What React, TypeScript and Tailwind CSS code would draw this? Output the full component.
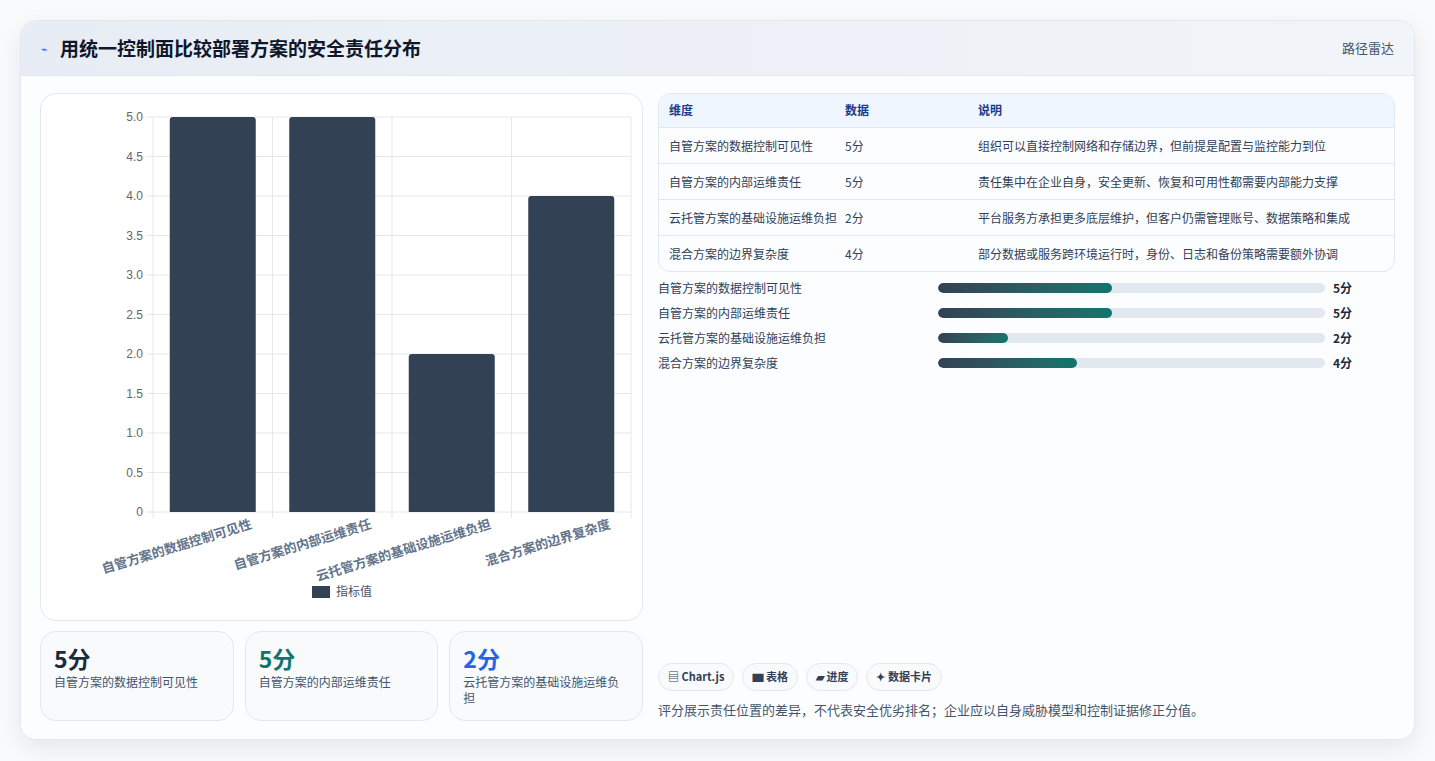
const font = { fontFamily: '"Noto Sans CJK SC", "Noto Sans", sans-serif' };

const rows = [
  { name: "自管方案的数据控制可见性", v: 5, note: "组织可以直接控制网络和存储边界，但前提是配置与监控能力到位" },
  { name: "自管方案的内部运维责任", v: 5, note: "责任集中在企业自身，安全更新、恢复和可用性都需要内部能力支撑" },
  { name: "云托管方案的基础设施运维负担", v: 2, note: "平台服务方承担更多底层维护，但客户仍需管理账号、数据策略和集成" },
  { name: "混合方案的边界复杂度", v: 4, note: "部分数据或服务跨环境运行时，身份、日志和备份策略需要额外协调" },
];

function Chart() {
  const x0 = 112, x1 = 590, y0 = 23, y1 = 418;
  const unit = (y1 - y0) / 5;
  const slot = (x1 - x0) / 4;
  const ticks = [0, 0.5, 1, 1.5, 2, 2.5, 3, 3.5, 4, 4.5, 5];
  return (
    <svg width="602" height="527" viewBox="0 0 602 527" style={font}>
      {ticks.map((t) => {
        const y = y1 - t * unit;
        return (
          <g key={t}>
            <line x1={x0 - 6} x2={x1} y1={y} y2={y} stroke="#e5e7eb" />
            <text x={x0 - 10} y={y + 4} fontSize="12" fill="#666" textAnchor="end" fontFamily="Liberation Sans, sans-serif">
              {t === 0 ? "0" : t.toFixed(1)}
            </text>
          </g>
        );
      })}
      {[0, 1, 2, 3, 4].map((i) => (
        <line key={i} x1={x0 + i * slot} x2={x0 + i * slot} y1={y0} y2={y1 + 6} stroke="#e5e7eb" />
      ))}
      {rows.map((r, i) => {
        const cx = x0 + slot * (i + 0.5);
        const h = r.v * unit;
        return (
          <g key={r.name}>
            <path d={`M${cx - 43} ${y1} V${y1 - h + 3} Q${cx - 43} ${y1 - h} ${cx - 40} ${y1 - h} H${cx + 40} Q${cx + 43} ${y1 - h} ${cx + 43} ${y1 - h + 3} V${y1} Z`} fill="#334155" />
            <text x={cx + 40} y={y1 + 16} fontSize="13" fontWeight="600" fill="#64748b" textAnchor="end" transform={`rotate(-17 ${cx + 40} ${y1 + 16})`}>
              {r.name}
            </text>
          </g>
        );
      })}
      <rect x="271" y="492" width="18" height="12" fill="#334155" />
      <text x="295" y="502" fontSize="12" fill="#475569">指标值</text>
    </svg>
  );
}

export default function App() {
  return (
    <div className="min-h-screen bg-[#f8fafc] pt-5 px-5" style={font}>
      <div className="bg-white rounded-2xl border border-slate-200 shadow-[0_8px_24px_rgba(15,23,42,0.08)] overflow-hidden">
        <div className="h-[55px] flex items-center justify-between px-5 bg-gradient-to-r from-[#e8edf5] to-[#f1f5f9] border-b border-slate-200">
          <div className="flex items-center gap-3">
            <span className="text-[11px] text-blue-600">⌁</span>
            <h1 className="text-[19px] font-bold text-[#0f172a]">用统一控制面比较部署方案的安全责任分布</h1>
          </div>
          <span className="text-[13px] text-slate-600">路径雷达</span>
        </div>
        <div className="flex gap-[15px] px-[19px] pt-[17px] pb-[18px] bg-[#fcfdfe]">
          <div className="w-[603px] flex flex-col gap-[10px]">
            <div className="h-[528px] rounded-2xl border border-slate-200 bg-white">
              <Chart />
            </div>
            <div className="grid grid-cols-3 gap-[11px]">
              {[
                { v: "5分", c: "text-[#1e293b]", l: "自管方案的数据控制可见性" },
                { v: "5分", c: "text-[#0f766e]", l: "自管方案的内部运维责任" },
                { v: "2分", c: "text-[#2563eb]", l: "云托管方案的基础设施运维负担" },
              ].map((s) => (
                <div key={s.l} className="h-[90px] rounded-2xl border border-slate-200 bg-[#f8fafc] px-[13px] pt-[11px]">
                  <div className={`text-[23px] font-bold leading-[30px] ${s.c}`}>{s.v}</div>
                  <div className="text-[12px] text-slate-600 leading-[16px] mt-[1px]">{s.l}</div>
                </div>
              ))}
            </div>
          </div>
          <div className="flex-1 flex flex-col">
            <div className="rounded-xl border border-slate-200 overflow-hidden">
              <table className="w-full text-[12px] text-slate-700">
                <thead>
                  <tr className="bg-[#eff6ff] text-[#1e3a8a] font-semibold text-left">
                    <th className="h-[33px] pl-[10px] w-[186px] font-semibold">维度</th>
                    <th className="w-[133px] font-semibold">数据</th>
                    <th className="font-semibold">说明</th>
                  </tr>
                </thead>
                <tbody>
                  {rows.map((r) => (
                    <tr key={r.name} className="border-t border-slate-200 align-top">
                      <td className="pl-[10px] pr-2 py-[9px] leading-[17px]">{r.name}</td>
                      <td className="py-[9px] leading-[17px]">{r.v}分</td>
                      <td className="py-[9px] pr-2 leading-[17px]">{r.note}</td>
                    </tr>
                  ))}
                </tbody>
              </table>
            </div>
            <div className="mt-[9px] flex flex-col gap-[10px]">
              {rows.map((r) => (
                <div key={r.name} className="flex items-center h-[15px] text-[12px] text-slate-700">
                  <span className="w-[280px]">{r.name}</span>
                  <div className="w-[387px] h-[10px] rounded-full bg-[#e2e8f0] overflow-hidden">
                    <div className="h-full rounded-full bg-gradient-to-r from-[#334155] to-[#0f766e]" style={{ width: `${r.v * 9}%` }} />
                  </div>
                  <span className="ml-2 font-semibold text-[#1e293b]">{r.v}分</span>
                </div>
              ))}
            </div>
            <div className="flex-1" />
            <div className="flex gap-2 text-[11px] font-semibold text-slate-700">
              {["▤ Chart.js", "▆ 表格", "▰ 进度", "✦ 数据卡片"].map((t) => (
                <span key={t} className="h-[28px] px-[9px] flex items-center rounded-full border border-slate-200 bg-[#f8fafc]">{t}</span>
              ))}
            </div>
            <p className="mt-[9px] text-[13px] text-slate-600 mb-[2px]">评分展示责任位置的差异，不代表安全优劣排名；企业应以自身威胁模型和控制证据修正分值。</p>
          </div>
        </div>
      </div>
    </div>
  );
}
